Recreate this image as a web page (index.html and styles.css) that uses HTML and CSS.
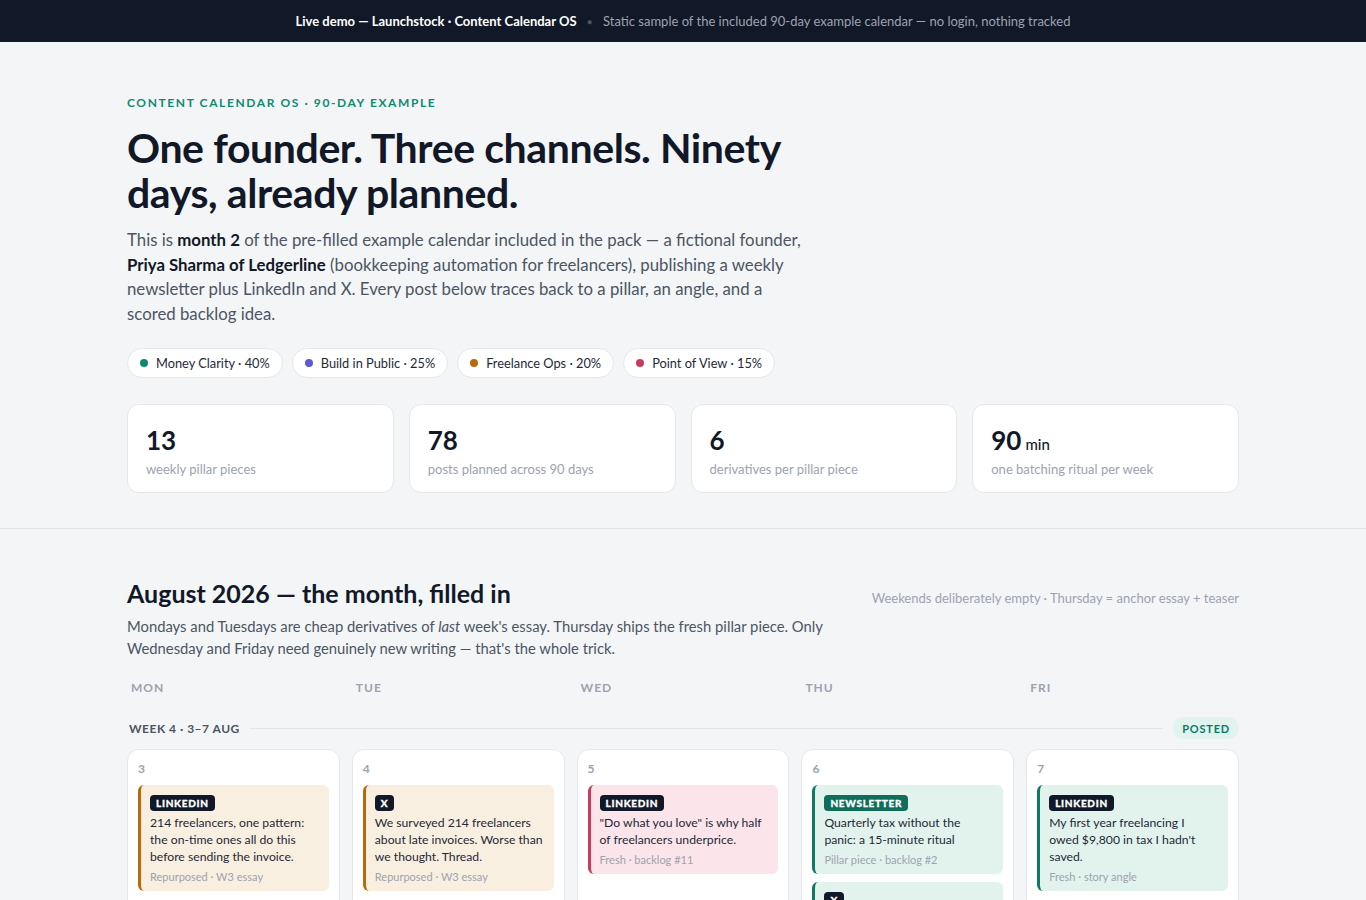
FILE: index.html
```html
<!DOCTYPE html>
<html lang="en">
<head>
<meta charset="utf-8">
<title>Content Calendar OS — Live demo</title>
<link rel="stylesheet" href="styles.css">
</head>
<body>
<div class="topbar">
  <span class="tb-strong">Live demo — Launchstock · Content Calendar OS</span>
  <span class="tb-sep">•</span>
  <span class="tb-muted">Static sample of the included 90-day example calendar — no login, nothing tracked</span>
</div>

<header class="hero">
  <div class="container">
    <div class="eyebrow">CONTENT CALENDAR OS · 90-DAY EXAMPLE</div>
    <h1 class="title">One founder. Three channels. Ninety days, already planned.</h1>
    <p class="lede">This is <strong>month 2</strong> of the pre-filled example calendar included in the pack — a fictional founder, <strong>Priya Sharma of Ledgerline</strong> (bookkeeping automation for freelancers), publishing a weekly newsletter plus LinkedIn and X. Every post below traces back to a pillar, an angle, and a scored backlog idea.</p>
    <div class="pills">
      <span class="pill"><span class="dot dot-money"></span>Money Clarity · 40%</span>
      <span class="pill"><span class="dot dot-build"></span>Build in Public · 25%</span>
      <span class="pill"><span class="dot dot-ops"></span>Freelance Ops · 20%</span>
      <span class="pill"><span class="dot dot-pov"></span>Point of View · 15%</span>
    </div>
    <div class="stats">
      <div class="stat"><div class="stat-num">13</div><div class="stat-label">weekly pillar pieces</div></div>
      <div class="stat"><div class="stat-num">78</div><div class="stat-label">posts planned across 90 days</div></div>
      <div class="stat"><div class="stat-num">6</div><div class="stat-label">derivatives per pillar piece</div></div>
      <div class="stat"><div class="stat-num">90<span class="stat-unit">min</span></div><div class="stat-label">one batching ritual per week</div></div>
    </div>
  </div>
</header>

<main class="calendar">
  <div class="container">
    <div class="cal-head">
      <h2 class="cal-title">August 2026 — the month, filled in</h2>
      <div class="cal-note">Weekends deliberately empty · Thursday = anchor essay + teaser</div>
    </div>
    <p class="cal-intro">Mondays and Tuesdays are cheap derivatives of <em>last</em> week's essay. Thursday ships the fresh pillar piece. Only Wednesday and Friday need genuinely new writing — that's the whole trick.</p>

    <div class="weekdays">
      <div class="wd">MON</div>
      <div class="wd">TUE</div>
      <div class="wd">WED</div>
      <div class="wd">THU</div>
      <div class="wd">FRI</div>
    </div>

    <div class="week-row">
      <span class="week-label">WEEK 4 · 3–7 AUG</span>
      <span class="week-line"></span>
      <span class="status">POSTED</span>
    </div>

    <div class="days">
      <div class="day">
        <div class="day-num">3</div>
        <div class="post post-ops">
          <span class="badge">LINKEDIN</span>
          <div class="post-text">214 freelancers, one pattern: the on-time ones all do this before sending the invoice.</div>
          <div class="post-meta">Repurposed · W3 essay</div>
        </div>
      </div>
      <div class="day">
        <div class="day-num">4</div>
        <div class="post post-ops">
          <span class="badge">X</span>
          <div class="post-text">We surveyed 214 freelancers about late invoices. Worse than we thought. Thread.</div>
          <div class="post-meta">Repurposed · W3 essay</div>
        </div>
      </div>
      <div class="day">
        <div class="day-num">5</div>
        <div class="post post-pov">
          <span class="badge">LINKEDIN</span>
          <div class="post-text">"Do what you love" is why half of freelancers underprice.</div>
          <div class="post-meta">Fresh · backlog #11</div>
        </div>
      </div>
      <div class="day">
        <div class="day-num">6</div>
        <div class="post post-money">
          <span class="badge badge-news">NEWSLETTER</span>
          <div class="post-text">Quarterly tax without the panic: a 15-minute ritual</div>
          <div class="post-meta">Pillar piece · backlog #2</div>
        </div>
        <div class="post post-money">
          <span class="badge">X</span>
          <div class="post-text">New essay: the 15-minute quarterly tax ritual that ended my April panic.</div>
          <div class="post-meta">Teaser · W4 essay</div>
        </div>
      </div>
      <div class="day">
        <div class="day-num">7</div>
        <div class="post post-money">
          <span class="badge">LINKEDIN</span>
          <div class="post-text">My first year freelancing I<br>owed $9,800 in tax I hadn't saved.</div>
          <div class="post-meta">Fresh · story angle</div>
        </div>
      </div>
    </div>
  </div>
</main>
</body>
</html>
```

FILE: styles.css
```css
* { box-sizing: border-box; }

html, body {
  margin: 0;
  padding: 0;
}

body {
  background: #f4f5f7;
  color: #111827;
  font-family: "Lato", "Noto Sans", "Liberation Sans", sans-serif;
  -webkit-font-smoothing: antialiased;
}

.container {
  width: 1112px;
  margin: 0 auto;
}

/* Top bar */
.topbar {
  height: 42px;
  background: #111827;
  display: flex;
  align-items: center;
  justify-content: center;
  gap: 10px;
  font-size: 13px;
}
.tb-strong { color: #ffffff; font-weight: 700; }
.tb-sep { color: #4b5563; font-size: 11px; }
.tb-muted { color: #9ca3af; }

/* Hero */
.hero {
  padding: 53px 0 35px;
  border-bottom: 1px solid #e3e5e9;
}
.eyebrow {
  font-size: 12px;
  line-height: 16px;
  font-weight: 700;
  letter-spacing: 1.6px;
  color: #0f8a70;
}
.title {
  margin: 14px 0 0;
  font-size: 41px;
  line-height: 45px;
  font-weight: 700;
  letter-spacing: -0.4px;
  color: #111827;
  max-width: 680px;
}
.lede {
  margin: 13px 0 0;
  max-width: 682px;
  font-size: 16.8px;
  line-height: 24.5px;
  color: #4b5563;
}
.lede strong { color: #111827; font-weight: 700; }

.pills {
  display: flex;
  gap: 9px;
  margin-top: 22px;
}
.pill {
  display: inline-flex;
  align-items: center;
  gap: 8px;
  height: 30px;
  padding: 0 12px;
  background: #ffffff;
  border: 1px solid #e5e7eb;
  border-radius: 15px;
  font-size: 12.8px;
  color: #1f2937;
}
.dot { width: 8px; height: 8px; border-radius: 50%; }
.dot-money { background: #0f8a6c; }
.dot-build { background: #5a5bd5; }
.dot-ops { background: #b86a0a; }
.dot-pov { background: #c83c63; }

.stats {
  display: grid;
  grid-template-columns: repeat(4, 1fr);
  gap: 15px;
  margin-top: 26px;
}
.stat {
  background: #ffffff;
  border: 1px solid #e5e7eb;
  border-radius: 12px;
  padding: 19px 18px 15px;
  height: 89px;
}
.stat-num {
  font-size: 26px;
  line-height: 32px;
  height: 32px;
  font-weight: 700;
  color: #111827;
}
.stat-unit {
  font-size: 15px;
  line-height: 0;
  font-weight: 500;
  margin-left: 4px;
}
.stat-label {
  margin-top: 4px;
  font-size: 13px;
  line-height: 18px;
  color: #9ca3af;
}

/* Calendar */
.calendar {
  padding: 49px 0 40px;
}
.cal-head {
  display: flex;
  justify-content: space-between;
  align-items: baseline;
}
.cal-title {
  margin: 0;
  font-size: 25px;
  line-height: 30px;
  font-weight: 700;
  color: #111827;
}
.cal-note {
  font-size: 13px;
  color: #9ca3af;
}
.cal-intro {
  margin: 7px 0 0;
  max-width: 720px;
  font-size: 14.8px;
  line-height: 22px;
  color: #4b5563;
}

.weekdays {
  display: grid;
  grid-template-columns: repeat(5, 1fr);
  gap: 12px;
  margin-top: 21px;
}
.wd {
  padding-left: 4px;
  font-size: 12px;
  line-height: 16px;
  font-weight: 700;
  letter-spacing: 1px;
  color: #9ca3af;
}

.week-row {
  display: flex;
  align-items: center;
  gap: 10px;
  margin-top: 21px;
  height: 22px;
  padding-left: 2px;
}
.week-label {
  font-size: 12px;
  font-weight: 700;
  letter-spacing: 0.5px;
  color: #4b5563;
}
.week-line {
  flex: 1;
  height: 1px;
  background: #e3e5e9;
}
.status {
  height: 22px;
  padding: 0 9px;
  display: inline-flex;
  align-items: center;
  border-radius: 11px;
  background: #e1f3ee;
  color: #0f7a63;
  font-size: 11px;
  font-weight: 700;
  letter-spacing: 0.8px;
}

.days {
  display: grid;
  grid-template-columns: repeat(5, 1fr);
  gap: 12px;
  margin-top: 10px;
}
.day {
  background: #ffffff;
  border: 1px solid #e5e7eb;
  border-radius: 12px;
  padding: 12px 10px 10px;
  min-height: 200px;
  display: flex;
  flex-direction: column;
  gap: 8px;
}
.day-num {
  font-size: 12px;
  line-height: 14px;
  font-weight: 700;
  color: #9ca3af;
  margin-bottom: 1px;
}
.post {
  display: flex;
  flex-direction: column;
  align-items: flex-start;
  border-left: 3px solid #b86a0a;
  border-radius: 6px;
  padding: 10px 9px 7px;
}
.post-ops { background: #f9efe0; border-left-color: #b86a0a; }
.post-pov { background: #fbe5ea; border-left-color: #c83c63; }
.post-money { background: #e2f3ee; border-left-color: #0f7a63; }

.badge {
  display: block;
  height: 16px;
  line-height: 16px;
  padding: 0 6px;
  border-radius: 4px;
  background: #111827;
  color: #ffffff;
  font-size: 10px;
  font-weight: 900;
  letter-spacing: 0.7px;
  -webkit-text-stroke: 0.3px #ffffff;
}
.badge-news { background: #0f6e5a; }
.post-text {
  margin-top: 3px;
  font-size: 12.2px;
  line-height: 17px;
  color: #1f2937;
}
.post-meta {
  margin-top: 5px;
  font-size: 11px;
  line-height: 14px;
  color: #9ca3af;
}
```
